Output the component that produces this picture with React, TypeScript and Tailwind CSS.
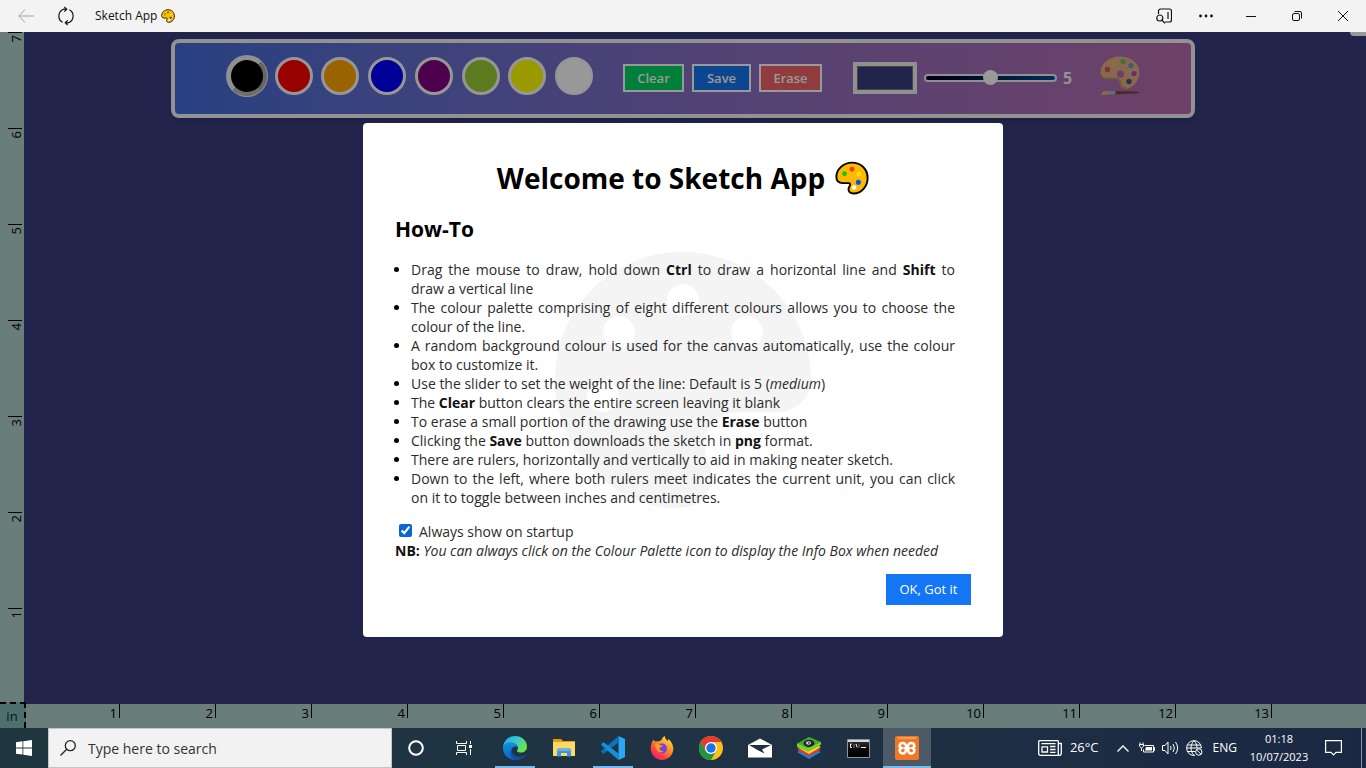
import { useState, type ReactNode } from "react";
import { FaPalette } from "react-icons/fa";

const SWATCHES = [
  { name: "Black", fill: "bg-black" },
  { name: "Red", fill: "bg-[#ff0000]" },
  { name: "Orange", fill: "bg-[#ffa500]" },
  { name: "Blue", fill: "bg-[#0000ff]" },
  { name: "Purple", fill: "bg-[#800080]" },
  { name: "Yellow green", fill: "bg-[#9acd32]" },
  { name: "Yellow", fill: "bg-[#ffff00]" },
  { name: "White", fill: "bg-white" },
];

function PaletteEmoji({ className }: { className: string }) {
  return (
    <svg viewBox="0 0 32 32" className={className} aria-hidden="true">
      <path
        d="M16 1.5C8 1.5 1.3 7.8 1.3 14.8c0 3.800 2.300 6 6 6h5.500c1.200 0 1.700.8 1.300 2-.5 1.300-1.400 2.300-1.400 3.900 0 2.400 2 3.900 4.800 3.900 7.500 0 13.200-6.800 13.200-14.600C30.700 7.600 24.500 1.500 16 1.500Z"
        fill="#ffb900"
        stroke="#000"
        strokeWidth="1.8"
      />
      <circle cx="9" cy="12" r="2.300" fill="#16c60c" />
      <circle cx="16" cy="7.700" r="2.300" fill="#f03a17" />
      <circle cx="22.500" cy="12.500" r="2.300" fill="#ffde00" />
      <circle cx="22" cy="20" r="2.400" fill="#0050ff" />
      <circle cx="18" cy="25" r="2.100" fill="#fff" />
    </svg>
  );
}

function PaletteAndBrush() {
  return (
    <svg viewBox="0 0 40 40" className="size-10" aria-hidden="true">
      <path
        fillRule="evenodd"
        d="M19.500.5C9 .5.500 8 .5 16.500c0 4 2.300 6.500 5.800 6.500h8.700c3.400 0 4.600 2 4.800 4.500.3 3.500 2.200 5.300 5.400 5.300C33 32.800 39.500 24.500 39.500 16 39.500 7 31 .5 19.500.5ZM20.500 14.500a3.600 3.600 0 1 1 0 7.200 3.600 3.600 0 0 1 0-7.200Z"
        fill="#e3ae84"
      />
      <path d="M.8 18c.8 3.300 3 4 5.500 4h9c3.500 0 5 2 5.200 5 .3 3 2 4.800 5 4.800" stroke="#b98458" strokeWidth="1" fill="none" />
      <circle cx="7.500" cy="13.500" r="2.700" fill="#d9505f" />
      <circle cx="13.500" cy="7.500" r="2.500" fill="#efb75d" />
      <circle cx="23" cy="5.500" r="2.600" fill="#6fbf55" />
      <circle cx="31" cy="9.500" r="2.600" fill="#5c9dc9" />
      <circle cx="34" cy="17.500" r="2.600" fill="#9c4fc4" />
      <circle cx="29" cy="25.500" r="2.700" fill="#4c5378" />
      <path d="M.5 38.500c2-1 2-3.500 4-3.800 1.300-.2 2.500.7 3.500.7v3c-2.500.5-4 1-7.500.1Z" fill="#e8ac75" />
      <path d="M7.500 35h8v3.500h-8z" fill="#a5bac4" />
      <path d="M15.500 35l20 .6c3 .2 4 .6 4 1s-1 .9-4 1l-20 .9z" fill="#7b4a3e" />
    </svg>
  );
}

function TitleBar() {
  const control = "flex h-8 w-[46px] items-center justify-center";
  return (
    <header className="flex h-8 shrink-0 items-center bg-[#f3f3f3] text-[#111]">
      <button aria-label="Back" className="ml-1 flex h-8 w-11 items-center justify-center">
        <svg viewBox="0 0 16 14" className="h-3.5 w-4" fill="none" stroke="#a3a3a3">
          <path d="M7 .5.800 7 7 13.500M.8 7H16" />
        </svg>
      </button>
      <button aria-label="Refresh" className="flex h-8 w-9 items-center justify-center">
        <svg viewBox="0 0 18 20" className="h-5 w-[18px]" fill="none" stroke="currentColor" strokeWidth="1.200">
          <path d="M5.500 16.300A7.300 7.300 0 0 1 6.500 3.200h3M7.300.800l2.400 2.400-2.400 2.400M12.500 3.700A7.300 7.300 0 0 1 11.500 16.800h-3M10.700 14.400l-2.400 2.400 2.400 2.400" />
        </svg>
      </button>
      <span className="ml-[11px] flex items-center gap-1 text-[12px]">
        Sketch App <PaletteEmoji className="size-3.5" />
      </span>
      <div className="ml-auto flex items-center">
        <button aria-label="Search in sidebar" className="flex h-8 w-10 items-center justify-center">
          <svg viewBox="0 0 16 16" className="size-4" fill="none" stroke="currentColor" strokeWidth="1.200">
            <path d="M2.500 6V3A2 2 0 0 1 4.500 1h9a2 2 0 0 1 2 2v9a2 2 0 0 1-2 2H9M12 4v7M5.800 12 9 15.300" />
            <circle cx="3.800" cy="10" r="3" />
          </svg>
        </button>
        <button aria-label="More" className="flex h-8 w-11 items-center justify-center">
          <svg viewBox="0 0 14 4" className="h-1 w-3.5" fill="currentColor">
            <circle cx="1.500" cy="2" r="1.400" />
            <circle cx="7" cy="2" r="1.400" />
            <circle cx="12.500" cy="2" r="1.400" />
          </svg>
        </button>
        <button aria-label="Minimize" className={control}>
          <svg viewBox="0 0 10 10" className="size-2.5" stroke="currentColor">
            <path d="M0 5.500h10" />
          </svg>
        </button>
        <button aria-label="Restore" className={control}>
          <svg viewBox="0 0 10 10" className="size-2.5" fill="none" stroke="currentColor">
            <rect x=".5" y="2.500" width="7" height="7" rx="1.500" />
            <path d="M2.500.5H8A1.500 1.500 0 0 1 9.500 2v5.500" />
          </svg>
        </button>
        <button aria-label="Close" className={control}>
          <svg viewBox="0 0 10 10" className="size-2.5" stroke="currentColor">
            <path d="m0 0 10 10M10 0 0 10" />
          </svg>
        </button>
      </div>
    </header>
  );
}

function Toolbar({ onInfo }: { onInfo: () => void }) {
  const [color, setColor] = useState("Black");
  const [weight, setWeight] = useState(5);
  const [background, setBackground] = useState("#393c7d");
  const action = "h-7 border-2 border-white text-[13px] leading-4 font-semibold text-white";
  return (
    <div className="flex h-[79px] w-3/4 items-center justify-center rounded-lg border-4 border-[#f3f3f3] bg-linear-to-r from-[#436cd8] to-[#b86cae] pb-0.5 pl-0.5 shadow-md">
      <div className="mb-1 flex w-[365px] items-center justify-between">
        {SWATCHES.map((s) => (
          <button
            key={s.name}
            aria-label={s.name}
            aria-pressed={s.name === color}
            onClick={() => setColor(s.name)}
            className={
              s.name === color
                ? `${s.fill} -mx-px size-10 rounded-full border-4 border-t-[#f0f0f0] border-r-[#a8a8a8] border-b-[#b8b8b8] border-l-[#f0f0f0] ring-1 ring-[#f0f0f0]`
                : `${s.fill} size-[38px] rounded-full border-3 border-[#fafafa]`
            }
          />
        ))}
      </div>
      <div className="ml-[30px] flex gap-2">
        <button className={`${action} w-[61px] bg-[#00d463]`}>Clear</button>
        <button className={`${action} w-[59px] bg-[#1475f0]`}>Save</button>
        <button className={`${action} w-[63px] bg-[#f06468]`}>Erase</button>
      </div>
      <div className="ml-[31px] flex items-center">
        <input
          type="color"
          aria-label="Canvas colour"
          value={background}
          onChange={(e) => setBackground(e.target.value)}
          className="h-8 w-16 appearance-none bg-[#f0f0f0] p-1 [&::-webkit-color-swatch]:rounded-none [&::-webkit-color-swatch]:border [&::-webkit-color-swatch]:border-[#777] [&::-webkit-color-swatch-wrapper]:p-0"
        />
        <input
          type="range"
          aria-label="Line weight"
          min={1}
          max={9}
          value={weight}
          onChange={(e) => setWeight(Number(e.target.value))}
          className="ml-[7px] h-2 w-[133px] appearance-none rounded-full border-2 border-[#f0f0f0] bg-linear-to-r from-[#000022] to-[#005090] [&::-webkit-slider-thumb]:size-[15px] [&::-webkit-slider-thumb]:appearance-none [&::-webkit-slider-thumb]:rounded-full [&::-webkit-slider-thumb]:bg-white"
        />
        <output className="ml-1.5 w-2.5 text-[16px] leading-5 font-bold text-[#f3f3f3]">{weight}</output>
      </div>
      <button aria-label="Show info box" onClick={onInfo} className="mb-1 ml-[27px]">
        <PaletteAndBrush />
      </button>
    </div>
  );
}

function InfoBox({ onClose }: { onClose: () => void }) {
  return (
    <div role="dialog" aria-labelledby="welcome" className="relative w-[640px] rounded bg-white p-8 text-[14px] leading-[19px] text-[#2b2b2b]">
      <div className="absolute inset-0 flex items-center justify-center">
        <FaPalette className="size-64 text-[#f4f4f4]" aria-hidden="true" />
      </div>
      <div className="relative [&_b]:text-[#111]">
        <h1 id="welcome" className="flex items-center justify-center gap-2.5 pt-1 text-[28px] leading-[38px] font-bold text-black">
          Welcome to Sketch App <PaletteEmoji className="size-[34px]" />
        </h1>
        <h2 className="mt-[18px] text-[21px] leading-[29px] font-bold text-black">How-To</h2>
        <ul className="mt-4 list-disc px-4 text-justify marker:text-black">
          <li>
            Drag the mouse to draw, hold down <b>Ctrl</b> to draw a horizontal line and <b>Shift</b> to draw a vertical line
          </li>
          <li>The colour palette comprising of eight different colours allows you to choose the colour of the line.</li>
          <li>A random background colour is used for the canvas automatically, use the colour box to customize it.</li>
          <li>
            Use the slider to set the weight of the line: Default is 5 (<i>medium</i>)
          </li>
          <li>
            The <b>Clear</b> button clears the entire screen leaving it blank
          </li>
          <li>
            To erase a small portion of the drawing use the <b>Erase</b> button
          </li>
          <li>
            Clicking the <b>Save</b> button downloads the sketch in <b>png</b> format.
          </li>
          <li>There are rulers, horizontally and vertically to aid in making neater sketch.</li>
          <li>
            Down to the left, where both rulers meet indicates the current unit, you can click on it to toggle between
            inches and centimetres.
          </li>
        </ul>
        <div className="mt-[15px] flex items-center gap-[7px] pl-1">
          <input id="startup" type="checkbox" defaultChecked className="mb-0.5 size-[13px] accent-[#0b65d8]" />
          <label htmlFor="startup">Always show on startup</label>
        </div>
        <p>
          <b>NB:</b> <i>You can always click on the Colour Palette icon to display the Info Box when needed</i>
        </p>
        <div className="mt-3.5 flex justify-end">
          <button onClick={onClose} className="h-[31px] w-[85px] bg-[#1475f5] text-[13px] text-white">
            OK, Got it
          </button>
        </div>
      </div>
    </div>
  );
}

function Workspace() {
  const [open, setOpen] = useState(true);
  return (
    <main className="relative grid min-h-0 flex-1 grid-cols-[24px_minmax(0,1fr)] grid-rows-[minmax(0,1fr)_24px] bg-[#afd0cd] text-[13px] leading-4 text-black">
      <div className="flex flex-col-reverse items-end overflow-hidden pr-0.5">
        {[1, 2, 3, 4, 5, 6, 7].map((n) => (
          <div key={n} className="flex h-24 w-3.5 shrink-0 items-start justify-end border-t border-black pt-0.5">
            <span className="rotate-180 leading-3 [writing-mode:vertical-rl]">{n}</span>
          </div>
        ))}
      </div>
      <div className="bg-[#393c7d]" />
      <button className="-mt-0.5 -mr-0.5 border-t-2 border-r-2 border-dashed border-black bg-[#84b8b8] text-[#002a44]">in</button>
      <div className="flex overflow-hidden">
        {[1, 2, 3, 4, 5, 6, 7, 8, 9, 10, 11, 12, 13].map((n) => (
          <div key={n} className="h-3.5 w-24 shrink-0 border-r border-black pt-px pr-0.5 text-right">
            {n}
          </div>
        ))}
      </div>
      <div className="absolute inset-x-0 top-[7px] flex justify-center">
        <Toolbar onInfo={() => setOpen(true)} />
      </div>
      <div className="absolute top-0 right-0 h-1 w-4 rounded-bl-sm bg-white" />
      {open && (
        <div className="absolute inset-0 flex items-center justify-center bg-black/40">
          <InfoBox onClose={() => setOpen(false)} />
        </div>
      )}
    </main>
  );
}

function EdgeIcon() {
  return (
    <svg viewBox="0 0 24 24" className="size-6">
      <defs>
        <linearGradient id="edgeTop" x1="0" y1="0" x2="1" y2=".5">
          <stop offset="0" stopColor="#2aa6e0" />
          <stop offset=".5" stopColor="#34c5d8" />
          <stop offset="1" stopColor="#6be34c" />
        </linearGradient>
        <linearGradient id="edgeLeft" x1="0" y1="0" x2="0" y2="1">
          <stop offset="0" stopColor="#1390dc" />
          <stop offset="1" stopColor="#0a66c8" />
        </linearGradient>
      </defs>
      <path d="M0 11.500C.5 5 5.500 0 12 0c7 0 12 5 12 10.500 0 4-2.800 6-6 6-2.500 0-4-.8-4-1.800 0-.7 1-1.200 1-2.700 0-2.500-2.500-5-6.500-5C4.500 7 1.300 9 0 11.500Z" fill="url(#edgeTop)" />
      <path d="M0 12c.5-4 4-5.800 7.500-5.800 4 0 7 2.400 7.500 5C11.500 9.300 8 11.800 8 16c0 3.500 2.500 6.700 6 7.600C6.500 25 0 19.500 0 12Z" fill="url(#edgeLeft)" />
      <path d="M9.300 12.500c-1.800 5 2.700 8.500 7.500 8.200 2.200-.1 4-.8 5.300-1.700.4-.2.8.200.5.600C20.500 22.600 17.500 24 14 24c-4-1-6.800-4-6.800-7.500 0-1.800.8-3.200 2.100-4Z" fill="#12509c" />
    </svg>
  );
}

function ExplorerIcon() {
  return (
    <svg viewBox="0 0 22 20" className="h-5 w-[22px]">
      <path d="M0 1h8l2 2h12v5H0z" fill="#e09f06" />
      <path d="M0 4h22v14H0z" fill="#ffd966" />
      <path d="M4 18.500V12q0-1.500 1.500-1.500h11Q18 10.500 18 12v6.500h-4V15H8v3.500z" fill="#3f96dc" />
      <path d="M4 12q0-1.500 1.500-1.500h11Q18 10.500 18 12v1H4z" fill="#65b3ea" />
    </svg>
  );
}

function CodeIcon() {
  return (
    <svg viewBox="0 0 24 24" className="size-6">
      <path d="M17.500 0 24 3v18l-6.500 3z" fill="#2ea7f2" />
      <path d="M17.500 0v6.500L3 17.500q-.5.500-1 0L.5 16q-.5-.6 0-1.200z" fill="#0a75bd" />
      <path d="M17.500 24v-6.500L3 6.500q-.5-.5-1 0L.5 8q-.5.600 0 1.200z" fill="#1290dc" />
    </svg>
  );
}

function FirefoxIcon() {
  return (
    <svg viewBox="0 0 24 24" className="size-6">
      <defs>
        <linearGradient id="fox" x1=".9" y1="0" x2=".2" y2="1">
          <stop offset="0" stopColor="#ffe94a" />
          <stop offset=".45" stopColor="#ff8d20" />
          <stop offset=".75" stopColor="#ff3d47" />
          <stop offset="1" stopColor="#e6197a" />
        </linearGradient>
      </defs>
      <path d="M3.500 3.500c.5 1 1 1.500 1.800 2 1-.3 2.200-.3 3.200 0 .8-.7 1.700-1 2.800-1.200C12 2.500 13 1 14.800 0c.3 2.500 1.500 3.500 3 5 .4-.7.4-1.300.3-2 3 2 5.200 6 5.200 9.800C23.300 19 18.300 24 12 24S.7 19 .7 12.800C.7 9 1.700 6 3.500 3.500Z" fill="url(#fox)" />
      <circle cx="12" cy="12.500" r="5" fill="#7542e5" />
      <path d="M4.500 9c2-1.500 4-1.500 5.500.2 1 0 2.200.1 2.800.4-.5 1.500-2.300 1.700-3.600 2.400.3 2.500 2.300 3.300 4.300 3-1.500 2-4.500 1.800-6-.2C6 12.800 6 10.800 4.500 9Z" fill="#ff9d25" />
    </svg>
  );
}

function ChromeIcon() {
  return (
    <svg viewBox="0 0 24 24" className="size-6">
      <circle cx="12" cy="12" r="12" fill="#fbc116" />
      <path d="M12 12 6.800 15 1.600 6A12 12 0 0 1 22.400 6H12z" fill="#e33b2e" />
      <path d="M1.600 6A12 12 0 0 0 12 24l5.200-9L12 12l-5.200 3z" fill="#229342" />
      <circle cx="12" cy="12" r="6" fill="#fff" />
      <circle cx="12" cy="12" r="4.700" fill="#1a73e8" />
    </svg>
  );
}

function MailIcon() {
  return (
    <svg viewBox="0 0 24 20" className="h-5 w-6">
      <path d="M0 7 12 .5 24 7v12.500H0z" fill="#fff" />
      <path d="M1 7h22l-9 4.500 2.500 4L9.500 12z" fill="#1e3141" />
    </svg>
  );
}

function BlueStacksIcon() {
  return (
    <svg viewBox="0 0 24 22" className="h-[22px] w-6">
      <path d="m0 15 12-5 12 5-12 7z" fill="#1687d4" />
      <path d="m0 12.500 12-5 12 5-12 7z" fill="#e5322d" />
      <path d="m0 10 12-5 12 5-12 7z" fill="#ffd51f" />
      <path d="m0 6.500 12-6.500 12 5-1 3.500L11 14.500 0 9.500z" fill="#3fae2a" />
      <path d="m0 6.500 11 5L24 5v2.500L11 14 0 9z" fill="#7fd431" />
      <ellipse cx="12" cy="6.300" rx="5.500" ry="3.600" fill="#20242e" />
      <ellipse cx="11.500" cy="6" rx="2.500" ry="1.700" fill="#e8e0ee" />
      <circle cx="11.800" cy="6" r="1.100" fill="#7c2f79" />
    </svg>
  );
}

function TerminalIcon() {
  return (
    <svg viewBox="0 0 23 19" className="h-[19px] w-[23px]">
      <defs>
        <linearGradient id="screen" x1="0" y1="0" x2="0" y2="1">
          <stop offset="0" stopColor="#3a3a3a" />
          <stop offset=".5" stopColor="#0a0a0a" />
          <stop offset="1" stopColor="#000" />
        </linearGradient>
      </defs>
      <path d="M.5.500h22v18H.5z" fill="url(#screen)" stroke="#8d9399" />
      <path d="M1 1h21v2H1z" fill="#d5d8db" />
      <path d="M5 5H3.500v3.500H5M7 5.700v.8M7 7.700v.8M9 5l1.200 3.500M12 5.700v.8M12 7.700v.8M14 8.500h5" stroke="#f1f1f1" fill="none" />
    </svg>
  );
}

function XamppIcon() {
  return (
    <svg viewBox="0 0 24 24" className="size-6">
      <rect width="24" height="24" rx="2" fill="#f37623" />
      <path d="M3 2h18" stroke="#ffc99b" />
      <path
        d="M8 7C4 7 3.800 11 6.500 12 3.800 13 4 17.500 8 17.500c3.200 0 2.800-3.500 4-5.300C13.200 10.500 12.800 7 16 7c4 0 4.200 4 1.500 5 2.700 1 2.500 5.500-1.500 5.500-3.200 0-2.800-3.500-4-5.300C10.800 10.500 11.200 7 8 7ZM9 12.200h6"
        fill="none"
        stroke="#fff"
        strokeWidth="2.500"
      />
    </svg>
  );
}

const APPS: { name: string; icon: ReactNode; state?: "open" | "active" }[] = [
  { name: "Edge", icon: <EdgeIcon />, state: "open" },
  { name: "File Explorer", icon: <ExplorerIcon /> },
  { name: "Visual Studio Code", icon: <CodeIcon />, state: "open" },
  { name: "Firefox", icon: <FirefoxIcon /> },
  { name: "Chrome", icon: <ChromeIcon /> },
  { name: "Mail", icon: <MailIcon /> },
  { name: "BlueStacks", icon: <BlueStacksIcon /> },
  { name: "Command Prompt", icon: <TerminalIcon /> },
  { name: "XAMPP", icon: <XamppIcon />, state: "active" },
];

function Taskbar() {
  const tray = "flex h-10 w-6 items-center justify-center";
  return (
    <footer className="flex h-10 shrink-0 items-stretch bg-linear-to-r from-[#20363f] via-[#1f3344] to-[#1b2843] text-white">
      <button aria-label="Start" className="flex w-12 items-center justify-center">
        <svg viewBox="0 0 16 16" className="size-4" fill="#fff">
          <path d="M0 2.200 6.500 1.300v6.200H0zM7.300 1.200 16 0v7.500H7.300zM0 8.400h6.500v6.200L0 13.700zM7.300 8.400H16V16l-8.700-1.200z" />
        </svg>
      </button>
      <label className="flex w-[344px] items-center gap-3 border border-[#c4c4c4] bg-[#f2f2f2] pl-[11px] text-[#333]">
        <svg viewBox="0 0 16 16" className="size-4 shrink-0" fill="none" stroke="#222" strokeWidth="1.300">
          <circle cx="10.300" cy="5.700" r="5" />
          <path d="M6.700 9.300.5 15.500" />
        </svg>
        <input
          type="search"
          aria-label="Search"
          placeholder="Type here to search"
          className="min-w-0 flex-1 bg-transparent text-[14px] outline-none placeholder:text-[#333]"
        />
      </label>
      <button aria-label="Cortana" className="flex w-12 items-center justify-center">
        <svg viewBox="0 0 16 16" className="size-4" fill="none" stroke="#fff" strokeWidth="2">
          <circle cx="8" cy="8" r="6.800" />
        </svg>
      </button>
      <button aria-label="Task view" className="flex w-12 items-center justify-center">
        <svg viewBox="0 0 17 16" className="h-4 w-[17px]" fill="none" stroke="#fff">
          <path d="M.5 1v2.500h10V1M.5 15v-2.500h10V15M1.500 5.500h8v5h-8zM14.500 1v3M14.500 9v6" />
          <path d="M13 5h3v3h-3z" fill="#fff" stroke="none" />
        </svg>
      </button>
      <nav className="ml-[3px] flex gap-px">
        {APPS.map((app) => (
          <button
            key={app.name}
            aria-label={app.name}
            className={
              app.state === "active"
                ? "flex w-12 flex-col items-center bg-[#4c5a67]"
                : "flex w-12 flex-col items-center"
            }
          >
            <span className="flex flex-1 items-center pt-0.5">{app.icon}</span>
            {app.state === "active" && <span className="h-0.5 w-12 bg-[#76b9ed]" />}
            {app.state === "open" && <span className="h-0.5 w-10 bg-[#76b9ed]" />}
            {!app.state && <span className="h-0.5" />}
          </button>
        ))}
      </nav>
      <div className="ml-auto flex items-center">
        <button className="mr-3 flex items-center gap-2 text-[13px]">
          <svg viewBox="0 0 24 16" className="h-4 w-6" fill="none" stroke="#fff" strokeWidth="1.300">
            <path d="M.7 1.500q0-.8.800-.8h18q.8 0 .8.800v13.800H2.500q-1.800 0-1.800-1.800zM20.300 3.500h3V13q0 2.300-1.700 2.300h-2M3.500 3.700h14M12 6.500h5.500M12 9.500h5.500M12 12.300h5.500M4 6.800h5.500V12H4z" />
          </svg>
          26°C
        </button>
        <button aria-label="Show hidden icons" className={tray}>
          <svg viewBox="0 0 12 7" className="h-[7px] w-3" fill="none" stroke="#fff" strokeWidth="1.300">
            <path d="m.5 6.500 5.500-5.500 5.500 5.500" />
          </svg>
        </button>
        <button aria-label="Battery" className={tray}>
          <svg viewBox="0 0 16 12" className="h-3 w-4" fill="none" stroke="#fff">
            <path d="M5.500 3.500h9v6.500h-10V7.500M14.500 5.500h1v3h-1" />
            <path d="M7 5h6v3.500H6z" fill="#fff" stroke="none" />
            <path d="M1 .5v2M4 .5v2M.5 2.500h4v1.800L2.500 6 .5 4.300zM2.500 6v3" />
          </svg>
        </button>
        <button aria-label="Volume" className={tray}>
          <svg viewBox="0 0 17 14" className="h-3.5 w-[17px]" fill="none" stroke="#fff">
            <path d="M.5 4.500h2.500l3-3.500v12l-3-3.500H.5zM8.500 5q1.300 2 0 4M11 3q2.800 4 0 8M13.500 1q4.300 6 0 12" />
          </svg>
        </button>
        <button aria-label="Network" className={tray}>
          <svg viewBox="0 0 17 16" className="h-4 w-[17px]" fill="none" stroke="#fff">
            <path d="M9 15.400A7.400 7.400 0 1 1 15.400 8M8 .6C4 5 4 11 8 15.400M8 .6c2 2 3 4.700 3 7.400M1.300 5h13.400M.6 8h14.800M1.300 11.500H9" />
            <circle cx="12.800" cy="12" r="3.200" />
            <path d="m10.600 9.800 4.400 4.400" />
          </svg>
        </button>
        <span className="ml-1.5 text-[12px]">ENG</span>
        <div className="ml-3 flex w-[60px] flex-col items-center text-[11px] leading-[18px]">
          <time>01:18</time>
          <time>10/07/2023</time>
        </div>
        <button aria-label="Notifications" className="ml-3 flex h-10 w-6 items-center justify-center">
          <svg viewBox="0 0 17 16" className="h-4 w-[17px]" fill="none" stroke="#fff" strokeWidth="1.200">
            <path d="M.6.600h15.800v11.800h-5.400L8.500 15 6 12.400H.6z" />
          </svg>
        </button>
        <div className="mr-1 ml-4 h-10 w-px bg-[#8a93a0]" />
      </div>
    </footer>
  );
}

export default function App() {
  return (
    <div className="flex h-screen flex-col overflow-hidden font-['Open_Sans','Noto_Sans',sans-serif]">
      <TitleBar />
      <Workspace />
      <Taskbar />
    </div>
  );
}
